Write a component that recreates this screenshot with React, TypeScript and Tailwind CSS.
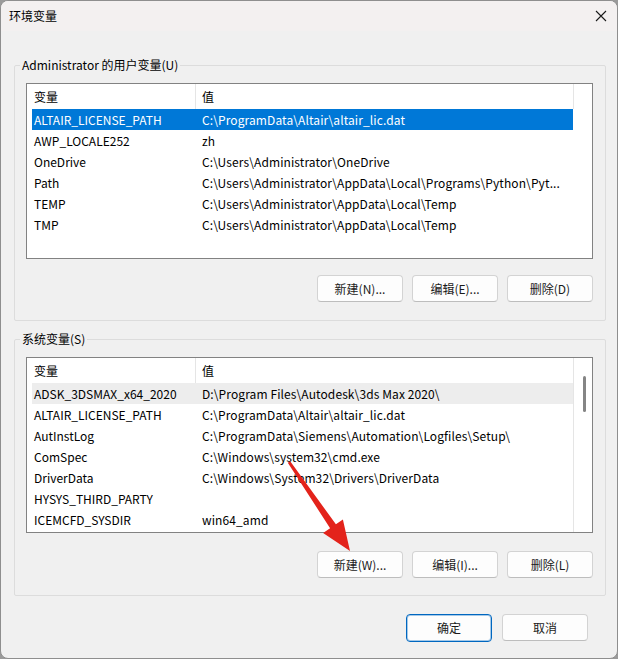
import React from "react";

const FONT = { fontFamily: '"Noto Sans CJK SC", "Noto Sans", sans-serif' };

type Row = [string, string];

const userRows: Row[] = [
  ["ALTAIR_LICENSE_PATH", "C:\\ProgramData\\Altair\\altair_lic.dat"],
  ["AWP_LOCALE252", "zh"],
  ["OneDrive", "C:\\Users\\Administrator\\OneDrive"],
  ["Path", "C:\\Users\\Administrator\\AppData\\Local\\Programs\\Python\\Pyt..."],
  ["TEMP", "C:\\Users\\Administrator\\AppData\\Local\\Temp"],
  ["TMP", "C:\\Users\\Administrator\\AppData\\Local\\Temp"],
];

const sysRows: Row[] = [
  ["ADSK_3DSMAX_x64_2020", "D:\\Program Files\\Autodesk\\3ds Max 2020\\"],
  ["ALTAIR_LICENSE_PATH", "C:\\ProgramData\\Altair\\altair_lic.dat"],
  ["AutInstLog", "C:\\ProgramData\\Siemens\\Automation\\Logfiles\\Setup\\"],
  ["ComSpec", "C:\\Windows\\system32\\cmd.exe"],
  ["DriverData", "C:\\Windows\\System32\\Drivers\\DriverData"],
  ["HYSYS_THIRD_PARTY", ""],
  ["ICEMCFD_SYSDIR", "win64_amd"],
];

function Rows({ rows, mode }: { rows: Row[]; mode: "selected" | "hover" }) {
  return (
    <div className="flex flex-col">
      {rows.map(([k, v], i) => {
        const first = i === 0;
        const cls =
          first && mode === "selected"
            ? "bg-[#0078d7] text-white"
            : first && mode === "hover"
            ? "bg-[#ededed] text-black"
            : "text-black";
        return (
          <div
            key={k + i}
            className={`ml-[5px] flex h-[21px] w-[541px] items-center whitespace-nowrap text-[12px] leading-[21px] ${cls}`}
          >
            <div className="w-[168px] overflow-hidden pl-[2px]">{k}</div>
            <div className="flex-1 overflow-hidden pl-[2px] tracking-[0.1px]">{v}</div>
          </div>
        );
      })}
    </div>
  );
}

function Btn({ label, primary }: { label: string; primary?: boolean }) {
  return (
    <div
      className={`flex w-[86px] items-center justify-center rounded-[4px] bg-[#fdfdfd] text-[12px] text-[#1a1a1a] ${
        primary
          ? "h-[28px] border border-[#0067c0] shadow-[inset_0_0_0_1px_rgba(0,103,192,0.35)]"
          : "h-[27px] border border-[#d3d3d3] border-b-[#bdbdbd]"
      }`}
    >
      {label}
    </div>
  );
}

function UserList() {
  return (
    <div className="h-[176px] w-[567px] border border-[#828282] bg-white">
      <div className="flex h-[25px] text-[12px] text-black">
        <div className="flex w-[169px] items-center border-r border-[#e5e5e5] pl-[7px]">变量</div>
        <div className="flex w-[378px] items-center border-r border-[#e5e5e5] pl-[6px]">值</div>
        <div className="flex-1" />
      </div>
      <Rows rows={userRows} mode="selected" />
    </div>
  );
}

function SysList() {
  return (
    <div className="flex h-[176px] w-[567px] border border-[#828282] bg-white">
      <div className="w-[546px]">
        <div className="flex h-[25px] text-[12px] text-black">
          <div className="flex w-[169px] items-center border-r border-[#e5e5e5] pl-[7px]">变量</div>
          <div className="flex flex-1 items-center pl-[6px]">值</div>
        </div>
        <Rows rows={sysRows} mode="hover" />
      </div>
      <div className="flex w-[19px] flex-col items-center border-l border-[#e5e5e5] bg-white pt-[18px]">
        <div className="ml-[2px] h-[36px] w-[3px] rounded-full bg-[#858585]" />
      </div>
    </div>
  );
}

export default function App() {
  return (
    <div className="h-[659px] w-[618px] bg-[#9a9a9a]" style={FONT}>
      <div className="relative flex h-[659px] w-[618px] flex-col overflow-hidden rounded-[8px] border border-[#8e8e8e] bg-[#f0f0f0]">
        {/* title bar */}
        <div className="flex h-[30px] items-center justify-between bg-[#f3f0f0] pl-[8px] pr-[9px]">
          <span className="text-[12px] text-black">环境变量</span>
          <svg width="12" height="12" viewBox="0 0 12 12" className="mr-[1px]">
            <path d="M1 1 L11 11 M11 1 L1 11" stroke="#1a1a1a" strokeWidth="1.1" fill="none" />
          </svg>
        </div>

        {/* user variables */}
        <fieldset className="ml-[13px] mr-[11px] mt-[27px] rounded-[2px] border border-[#dcdcdc] p-0">
          <legend className="ml-[5px] px-[2px] text-[12px] leading-[14px] text-black">
            Administrator 的用户变量(U)
          </legend>
          <div className="flex flex-col pb-[18px] pl-[11px] pr-[11px] pt-[11px]">
            <UserList />
            <div className="mt-[16px] flex justify-end gap-[9px] pr-[1px]">
              <Btn label="新建(N)..." />
              <Btn label="编辑(E)..." />
              <Btn label="删除(D)" />
            </div>
          </div>
        </fieldset>

        {/* system variables */}
        <fieldset className="ml-[13px] mr-[11px] mt-[11px] rounded-[2px] border border-[#dcdcdc] p-0">
          <legend className="ml-[5px] px-[2px] text-[12px] leading-[14px] text-black">系统变量(S)</legend>
          <div className="flex flex-col pb-[17px] pl-[11px] pr-[11px] pt-[11px]">
            <SysList />
            <div className="mt-[18px] flex justify-end gap-[9px] pr-[1px]">
              <Btn label="新建(W)..." />
              <Btn label="编辑(I)..." />
              <Btn label="删除(L)" />
            </div>
          </div>
        </fieldset>

        {/* dialog buttons */}
        <div className="mt-[18px] flex justify-end gap-[10px] pr-[29px]">
          <Btn label="确定" primary />
          <Btn label="取消" />
        </div>

        {/* red annotation arrow */}
        <svg
          className="pointer-events-none absolute left-[-1px] top-[-1px]"
          width="618"
          height="659"
          viewBox="0 0 618 659"
        >
          <polygon
            points="287.8,462.8 330.1,528.2 323.1,533.0 350,551 342.9,519.5 335.9,524.3 290.2,461.2"
            fill="#e3231b"
          />
        </svg>
      </div>
    </div>
  );
}
